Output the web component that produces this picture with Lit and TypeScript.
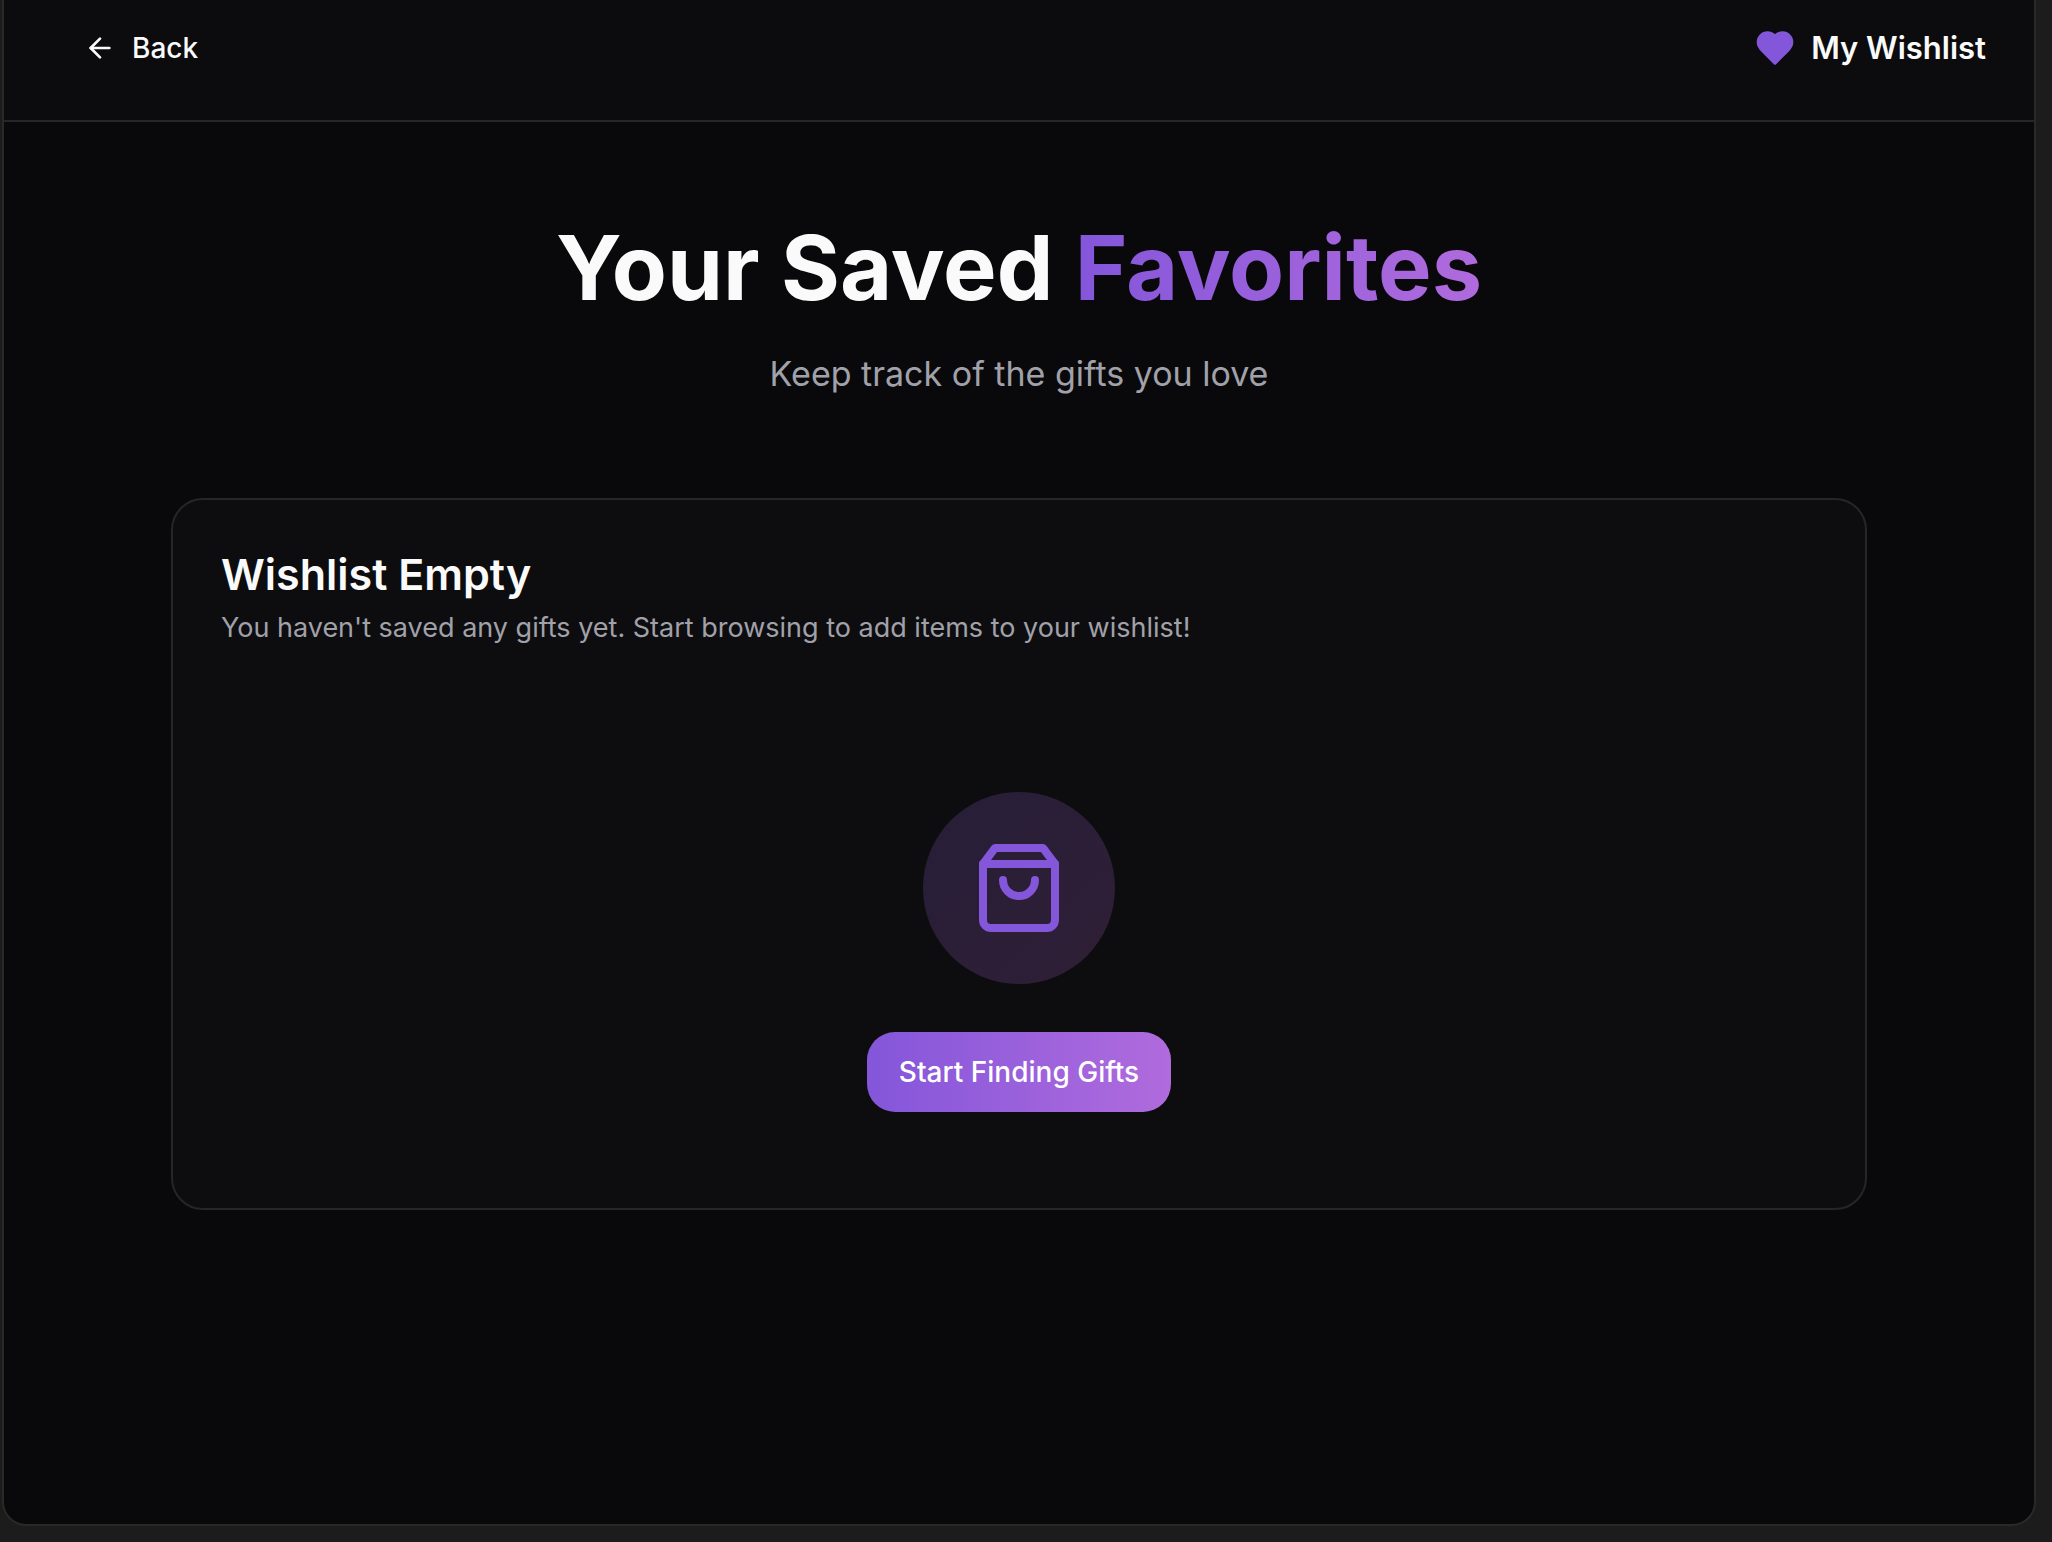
import { LitElement, html, css } from "lit";
import { customElement } from "lit/decorators.js";

@customElement("app-root")
export class AppRoot extends LitElement {
  static styles = css`
    :host {
      --background: #09090b;
      --surface: #0c0c0e;
      --border: #262628;
      --foreground: #fafafa;
      --muted: #a1a1aa;
      --primary: #8456da;
      --accent: #b06bdd;
      display: block;
      background: #1c1c1c;
      color: var(--foreground);
      font-family: Inter, "Liberation Sans", sans-serif;
      font-size: 28px;
      line-height: 40px;
    }
    *,
    *::before,
    *::after {
      box-sizing: border-box;
    }
    h1,
    h2,
    p {
      margin: 0;
    }
    .frame {
      display: flex;
      min-height: 100vh;
      padding: 0 16px 16px 2px;
    }
    .window {
      flex: 1;
      min-width: 0;
      overflow: hidden;
      background: var(--background);
      border: 2px solid #292927;
      border-top: 0;
      border-radius: 0 0 24px 24px;
    }
    .topbar {
      display: flex;
      align-items: center;
      justify-content: space-between;
      padding: 12px 48px 36px;
      background: var(--surface);
      border-bottom: 2px solid var(--border);
    }
    .back {
      display: flex;
      align-items: center;
      gap: 16px;
      height: 72px;
      padding: 0 32px;
      border: 0;
      border-radius: 24px;
      background: none;
      color: inherit;
      font: inherit;
      font-weight: 500;
      cursor: pointer;
    }
    .brand {
      display: flex;
      align-items: center;
      gap: 16px;
      font-size: 31px;
      font-weight: 600;
    }
    svg {
      display: block;
      flex: none;
      fill: none;
      stroke: currentColor;
      stroke-width: 2;
      stroke-linecap: round;
      stroke-linejoin: round;
    }
    .icon-arrow {
      width: 32px;
      height: 32px;
    }
    .icon-heart {
      width: 40px;
      height: 40px;
      color: var(--primary);
      fill: currentColor;
    }
    .icon-bag {
      width: 96px;
      height: 96px;
      color: var(--primary);
    }
    .content {
      max-width: 1792px;
      margin: 0 auto;
      padding: 96px 48px;
    }
    .intro {
      display: flex;
      flex-direction: column;
      gap: 28px;
      margin-bottom: 96px;
      text-align: center;
    }
    .headline {
      font-size: 90px;
      font-weight: 700;
      line-height: 100px;
    }
    .highlight {
      background: linear-gradient(90deg, var(--primary), var(--accent));
      -webkit-background-clip: text;
      background-clip: text;
      color: transparent;
    }
    .tagline {
      color: var(--muted);
      font-size: 34px;
      line-height: 56px;
    }
    .card {
      background: #0d0d0f;
      border: 2px solid var(--border);
      border-radius: 32px;
    }
    .card-header {
      display: flex;
      flex-direction: column;
      gap: 8px;
      padding: 48px;
    }
    .card-title {
      font-size: 43px;
      font-weight: 600;
      line-height: 52px;
    }
    .card-text {
      color: var(--muted);
      font-size: 27px;
    }
    .card-body {
      display: flex;
      flex-direction: column;
      align-items: center;
      gap: 48px;
      padding: 96px 48px;
    }
    .badge {
      display: grid;
      place-items: center;
      width: 192px;
      height: 192px;
      border-radius: 50%;
      background: linear-gradient(135deg, #271e38, #2f1f36);
    }
    .start {
      height: 80px;
      padding: 0 32px;
      border: 0;
      border-radius: 28px;
      background: linear-gradient(90deg, var(--primary), var(--accent));
      color: #fff;
      font: inherit;
      font-weight: 500;
      cursor: pointer;
    }
  `;

  render() {
    return html`
      <div class="frame">
        <div class="window">
          <header class="topbar">
            <button class="back" type="button">
              <svg class="icon-arrow" viewBox="0 0 24 24" aria-hidden="true">
                <path d="m12 19-7-7 7-7" />
                <path d="M19 12H5" />
              </svg>
              Back
            </button>
            <div class="brand">
              <svg class="icon-heart" viewBox="0 0 24 24" aria-hidden="true">
                <path
                  d="M19 14c1.49-1.46 3-3.21 3-5.5A5.5 5.5 0 0 0 16.5 3c-1.76 0-3 .5-4.5 2-1.5-1.5-2.74-2-4.5-2A5.5 5.5 0 0 0 2 8.5c0 2.3 1.5 4.05 3 5.5l7 7Z"
                />
              </svg>
              <span>My Wishlist</span>
            </div>
          </header>
          <main class="content">
            <div class="intro">
              <h1 class="headline">Your Saved <span class="highlight">Favorites</span></h1>
              <p class="tagline">Keep track of the gifts you love</p>
            </div>
            <section class="card">
              <div class="card-header">
                <h2 class="card-title">Wishlist Empty</h2>
                <p class="card-text">
                  You haven't saved any gifts yet. Start browsing to add items to your wishlist!
                </p>
              </div>
              <div class="card-body">
                <div class="badge">
                  <svg class="icon-bag" viewBox="0 0 24 24" aria-hidden="true">
                    <path d="M6 2 3 6v14a2 2 0 0 0 2 2h14a2 2 0 0 0 2-2V6l-3-4Z" />
                    <path d="M3 6h18" />
                    <path d="M16 10a4 4 0 0 1-8 0" />
                  </svg>
                </div>
                <button class="start" type="button">Start Finding Gifts</button>
              </div>
            </section>
          </main>
        </div>
      </div>
    `;
  }
}
